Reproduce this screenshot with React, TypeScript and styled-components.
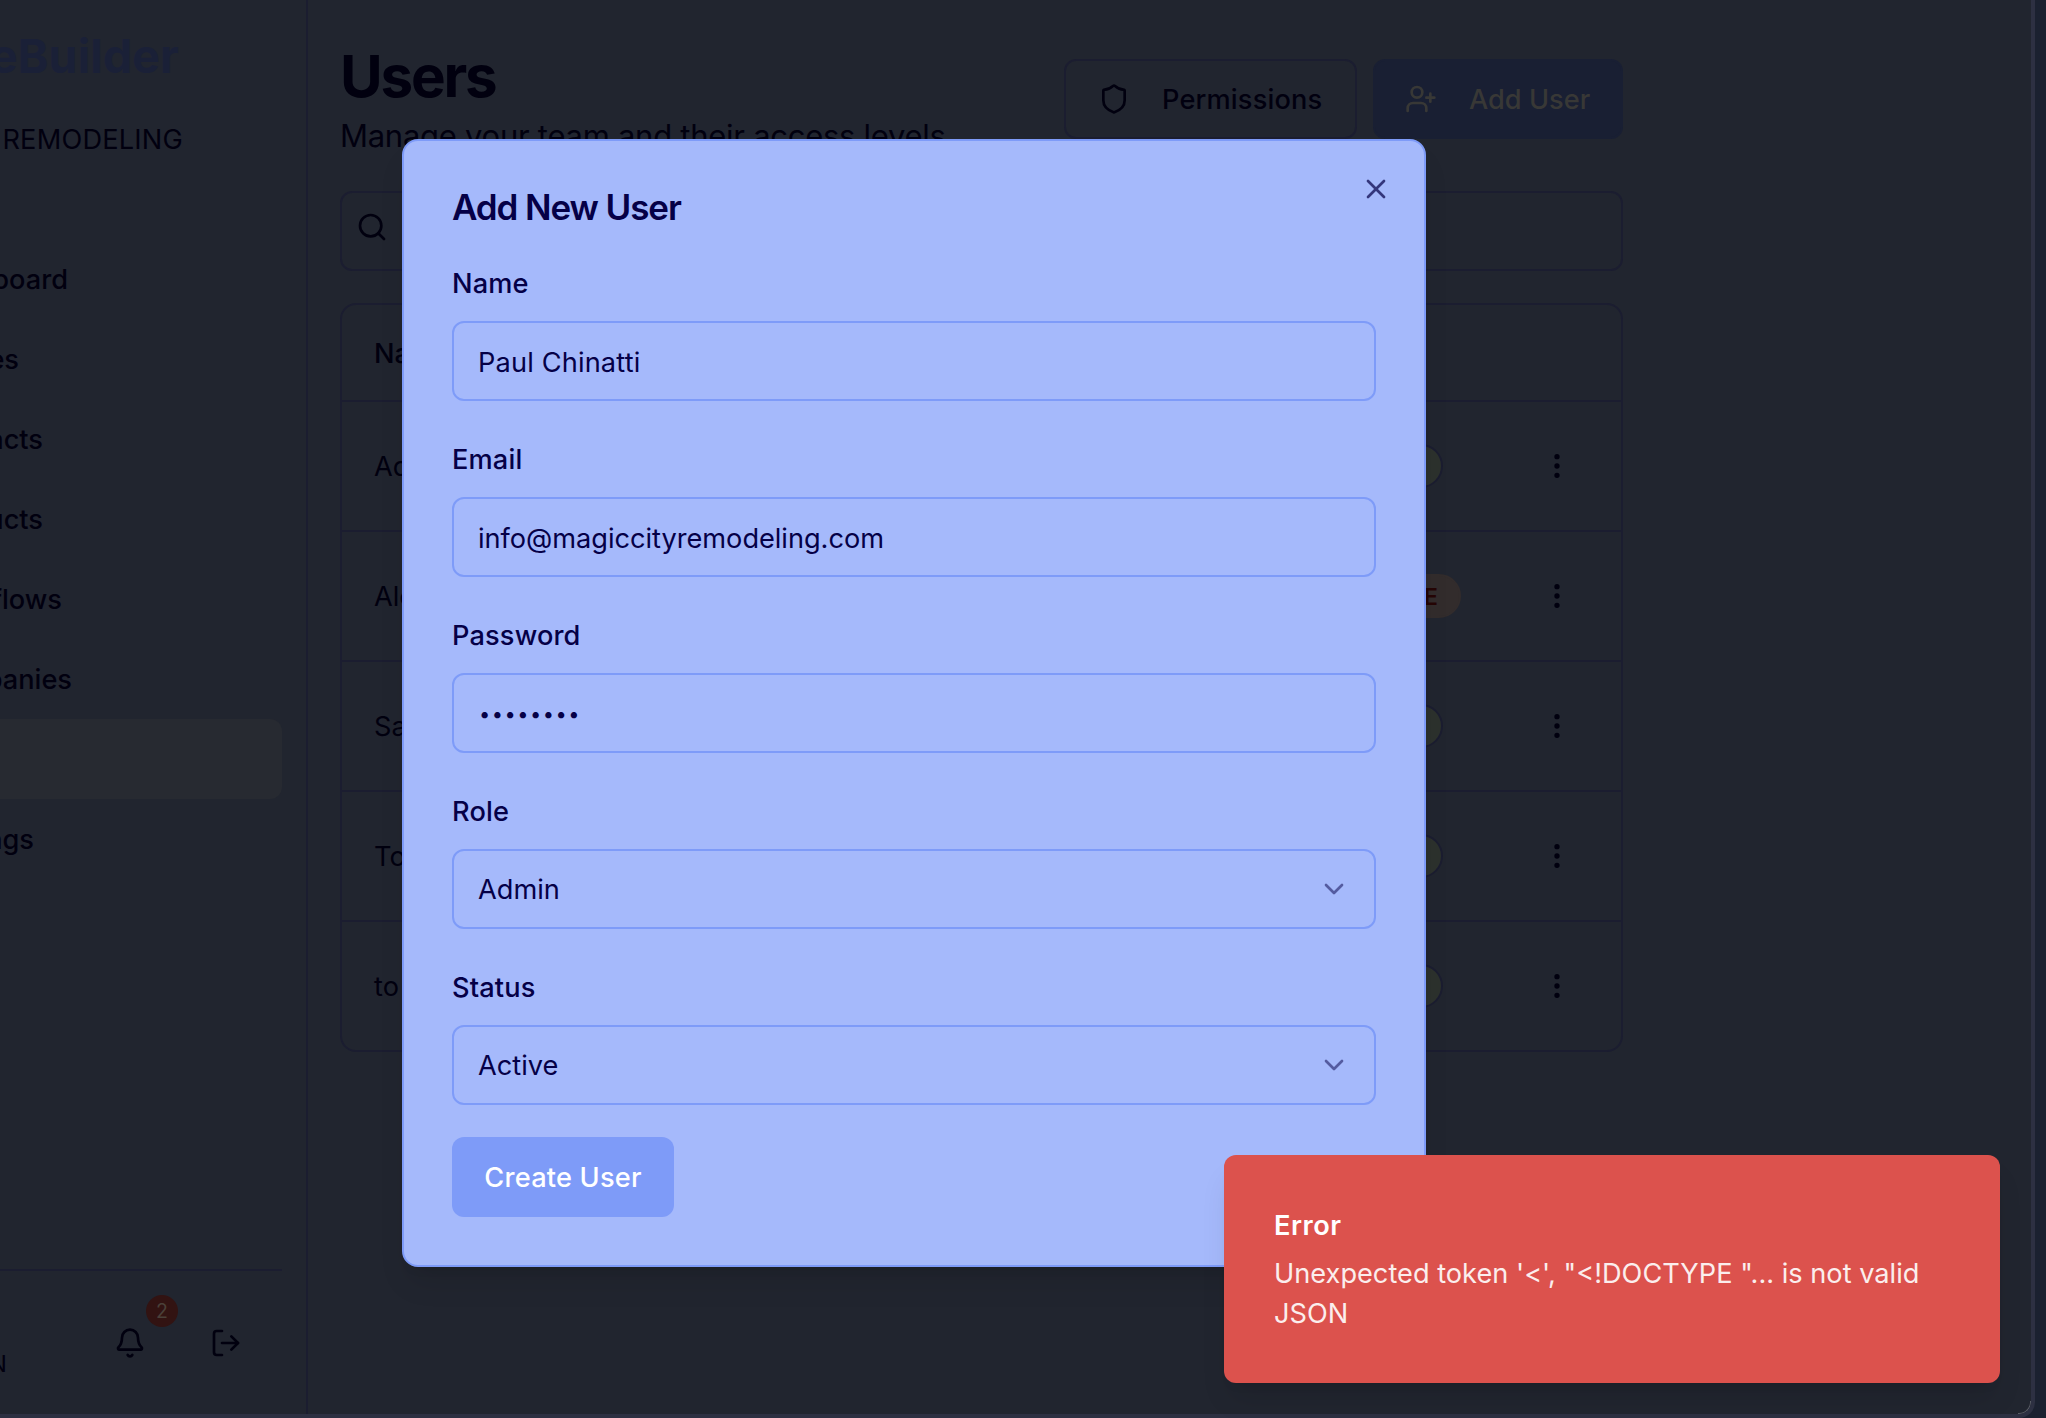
import React from "react";
import styled, { createGlobalStyle } from "styled-components";
import { Bell, ChevronDown, EllipsisVertical, LogOut, Search, Shield, UserPlus, X } from "lucide-react";

const ink = "#01000f";
const page = "#21252f";
const line = "#1b1d30";
const navy = "#050047";
const periwinkle = "#a5b9fb";
const accent = "#7e9bf8";

const GlobalStyle = createGlobalStyle`
  * { box-sizing: border-box; }
  html, body, #root { height: 100%; }
  body {
    margin: 0;
    overflow: hidden;
    background: #1b2130;
    font-family: Inter, "Noto Sans", sans-serif;
    font-size: 27.2px;
    color: ${ink};
  }
`;

const Window = styled.div`
  position: relative;
  display: flex;
  width: 2035px;
  height: 1418px;
  border: solid #2d3042;
  border-width: 0 4px 4px 0;
  border-radius: 0 0 16px 0;
  background: ${page};
  overflow: hidden;

  /* Thin glint along the rounded inner corner. */
  &::after {
    content: "";
    position: absolute;
    right: 0;
    bottom: 0;
    width: 12px;
    height: 12px;
    border: solid #5a5d66;
    border-width: 0 1px 1px 0;
    border-radius: 0 0 12px 0;
  }
`;

const Sidebar = styled.aside`
  flex: none;
  display: flex;
  flex-direction: column;
  width: 308px;
  padding-right: 24px;
  border-right: 2px solid ${line};
  overflow: hidden;
`;

/* Text that runs out of the left edge and ends at a fixed distance from it. */
const Clipped = styled.span<{ $end: number; $spacing?: number }>`
  display: flex;
  justify-content: flex-end;
  width: ${(p) => p.$end}px;
  white-space: nowrap;
  letter-spacing: ${(p) => p.$spacing ?? 0}px;
`;

const Brand = styled.div`
  margin-top: 24px;
  height: 64px;
  line-height: 64px;
  font-size: 46.6px;
  font-weight: 700;
  color: #1a2037;
`;

const Company = styled.div`
  margin-top: 32px;
  height: 40px;
  line-height: 40px;
`;

const Nav = styled.nav`
  margin-top: 79px;
  flex: 1;
`;

const NavItem = styled.div<{ $active?: boolean }>`
  display: flex;
  align-items: center;
  height: 80px;
  border-radius: 0 12px 12px 0;
  font-weight: 500;
  background: ${(p) => (p.$active ? "#272a31" : "transparent")};
`;

const Account = styled.div`
  display: flex;
  align-items: flex-start;
  height: 145px;
  border-top: 2px solid ${line};
`;

const AccountName = styled.div`
  flex: none;
  width: 98px;
  padding-top: 77px;
  font-size: 23.4px;
  line-height: 32px;
`;

const IconButton = styled.div`
  position: relative;
  flex: none;
  display: flex;
  width: 64px;
  margin: 56px 32px 0 0;
  padding-left: 16px;
`;

const Count = styled.span`
  position: absolute;
  top: -32px;
  left: 48px;
  width: 32px;
  height: 32px;
  border-radius: 50%;
  background: #321312;
  color: #4a4039;
  font-size: 19.5px;
  line-height: 32px;
  text-align: center;
`;

const Main = styled.main`
  width: 1315px;
  padding: 46px 0 0 32px;
`;

const Header = styled.header`
  display: flex;
  justify-content: space-between;
  height: 145px;
`;

const Heading = styled.h1`
  margin: 0;
  font-size: 58.3px;
  line-height: 60px;
  font-weight: 700;
  letter-spacing: -2.2px;
`;

const Lead = styled.p`
  margin: 6px 0 0;
  font-size: 31px;
  line-height: 48px;
  letter-spacing: -0.27px;
  white-space: nowrap;
`;

const Actions = styled.div`
  display: flex;
  gap: 16px;
  padding-top: 13px;
`;

const Action = styled.button<{ $primary?: boolean }>`
  display: flex;
  align-items: center;
  gap: 32px;
  width: ${(p) => (p.$primary ? 250 : 293)}px;
  height: 80px;
  padding: 0 0 0 ${(p) => (p.$primary ? 30 : 32)}px;
  border: 2px solid ${(p) => (p.$primary ? "#191f33" : line)};
  border-radius: 12px;
  background: ${(p) => (p.$primary ? "#191f33" : page)};
  color: ${(p) => (p.$primary ? "#383836" : ink)};
  font: 500 27.2px Inter, sans-serif;
  letter-spacing: ${(p) => (p.$primary ? 0 : 0.15)}px;
  white-space: nowrap;
`;

const SearchBox = styled.div`
  display: flex;
  align-items: center;
  height: 80px;
  padding: 0 0 8px 14px;
  border: 2px solid ${line};
  border-radius: 12px;
`;

const Table = styled.div`
  margin-top: 32px;
  border: 2px solid ${line};
  border-radius: 16px;
`;

const Row = styled.div<{ $head?: boolean }>`
  display: grid;
  grid-template-columns: 931px 236px 1fr;
  align-items: center;
  height: ${(p) => (p.$head ? 97 : 130)}px;
  padding: ${(p) => (p.$head ? 2 : 0)}px 0 0 32px;
  border-bottom: 2px solid ${line};
  font-weight: ${(p) => (p.$head ? 500 : 400)};
  &:last-child { height: 128px; border-bottom: 0; }
`;

const Badge = styled.span<{ $inactive?: boolean }>`
  justify-self: start;
  width: ${(p) => (p.$inactive ? 156 : 138)}px;
  height: 44px;
  border: 2px solid ${(p) => (p.$inactive ? "#322c2c" : line)};
  border-radius: 22px;
  padding-right: 21px;
  background: ${(p) => (p.$inactive ? "#322c2c" : "#2c312d")};
  color: ${(p) => (p.$inactive ? "#250505" : ink)};
  font-size: 23.4px;
  font-weight: 600;
  line-height: 41px;
  text-align: right;
`;

const Dialog = styled.section`
  position: absolute;
  left: 402px;
  top: 139px;
  display: flex;
  flex-direction: column;
  gap: 32px;
  width: 1024px;
  height: 1128px;
  padding: 48px;
  border: 2px solid ${accent};
  border-radius: 16px;
  background: ${periwinkle};
  color: ${navy};
  box-shadow: 0 20px 30px -6px rgba(0, 0, 0, 0.1), 0 8px 12px -8px rgba(0, 0, 0, 0.1);
`;

const Close = styled.div`
  position: absolute;
  top: 32px;
  right: 32px;
  display: flex;
  opacity: 0.7;
`;

const Title = styled.h2`
  margin: 0;
  font-size: 35px;
  line-height: 37px;
  height: 36px;
  font-weight: 600;
  letter-spacing: -1.1px;
`;

const Field = styled.div`
  display: flex;
  flex-direction: column;
  gap: 16px;
`;

const Label = styled.label`
  height: 48px;
  padding-top: 3px;
  line-height: 48px;
  font-weight: 500;
  letter-spacing: 0.15px;
`;

const Control = styled.div`
  display: flex;
  align-items: center;
  justify-content: space-between;
  height: 80px;
  padding: 0 24px;
  border: 2px solid ${accent};
  border-radius: 12px;
  svg { opacity: 0.5; }
`;

const Value = styled.span<{ $spacing?: number; $select?: boolean }>`
  padding-top: ${(p) => (p.$select ? 0 : 2)}px;
  letter-spacing: ${(p) => p.$spacing ?? 0}px;
`;

const Mask = styled(Value)`
  padding: 2px 0 0 1px;
  font-size: 20px;
  letter-spacing: 1.5px;
`;

const Submit = styled.button`
  width: 222px;
  height: 80px;
  padding: 0;
  border: 0;
  border-radius: 12px;
  background: ${accent};
  color: #fff;
  font: 500 27.2px Inter, sans-serif;
  letter-spacing: 0.2px;
`;

const Toast = styled.div`
  position: absolute;
  left: 1224px;
  top: 1155px;
  display: flex;
  flex-direction: column;
  justify-content: center;
  width: 776px;
  height: 228px;
  padding: 2px 50px 0;
  border-radius: 12px;
  background: #dc524d;
  color: #fff;
  line-height: 40px;
  box-shadow: 0 20px 30px -6px rgba(0, 0, 0, 0.1), 0 8px 12px -8px rgba(0, 0, 0, 0.1);
`;

const ToastTitle = styled.div`
  font-weight: 600;
  margin-bottom: 8px;
  letter-spacing: 0.5px;
`;

const ToastText = styled.div`
  opacity: 0.9;
  white-space: pre-line;
`;

const nav = [
  { label: "Dashboard", end: 68 },
  { label: "Quotes", end: 19 },
  { label: "Contacts", end: 43 },
  { label: "Products", end: 43 },
  { label: "Workflows", end: 62 },
  { label: "Companies", end: 72 },
  { label: "", end: 0, active: true },
  { label: "Settings", end: 34 },
];

const users = [
  { name: "Admin" },
  { name: "Alex", inactive: true },
  { name: "Sarah" },
  { name: "Tom" },
  { name: "to" },
];

const fields = [
  { label: "Name", value: "Paul Chinatti", spacing: 0.15 },
  { label: "Email", value: "info@magiccityremodeling.com", spacing: -0.03 },
  { label: "Password", value: "••••••••", masked: true },
  { label: "Role", value: "Admin", select: true },
  { label: "Status", value: "Active", select: true },
];

export default function App() {
  return (
    <>
      <GlobalStyle />
      <Window>
        <Sidebar>
          <Brand><Clipped $end={179}>SiteBuilder</Clipped></Brand>
          <Company><Clipped $end={183} $spacing={0.2}>REMODELING</Clipped></Company>
          <Nav>
            {nav.map((n, i) => (
              <NavItem key={i} $active={n.active}><Clipped $end={n.end}>{n.label}</Clipped></NavItem>
            ))}
          </Nav>
          <Account>
            <AccountName><Clipped $end={7}>ADMIN</Clipped></AccountName>
            <IconButton><Bell size={32} /><Count>2</Count></IconButton>
            <IconButton><LogOut size={32} /></IconButton>
          </Account>
        </Sidebar>
        <Main>
          <Header>
            <div>
              <Heading>Users</Heading>
              <Lead>Manage your team and their access levels</Lead>
            </div>
            <Actions>
              <Action><Shield size={32} />Permissions</Action>
              <Action $primary><UserPlus size={32} />Add User</Action>
            </Actions>
          </Header>
          <SearchBox><Search size={32} /></SearchBox>
          <Table>
            <Row $head><span>Name</span></Row>
            {users.map((u) => (
              <Row key={u.name}>
                <span>{u.name}</span>
                <Badge $inactive={u.inactive}>{u.inactive ? "INACTIVE" : "ACTIVE"}</Badge>
                <EllipsisVertical size={32} />
              </Row>
            ))}
          </Table>
        </Main>
      </Window>
      <Dialog>
        <Title>Add New User</Title>
        {fields.map((f) => (
          <Field key={f.label}>
            <Label>{f.label}</Label>
            <Control>
              {f.masked ? (
                <Mask>{f.value}</Mask>
              ) : (
                <Value $spacing={f.spacing} $select={f.select}>{f.value}</Value>
              )}
              {f.select && <ChevronDown size={32} />}
            </Control>
          </Field>
        ))}
        <Submit>Create User</Submit>
        <Close><X size={32} /></Close>
      </Dialog>
      <Toast>
        <ToastTitle>Error</ToastTitle>
        <ToastText>{"Unexpected token '<', \"<!DOCTYPE \"... is not valid\nJSON"}</ToastText>
      </Toast>
    </>
  );
}
